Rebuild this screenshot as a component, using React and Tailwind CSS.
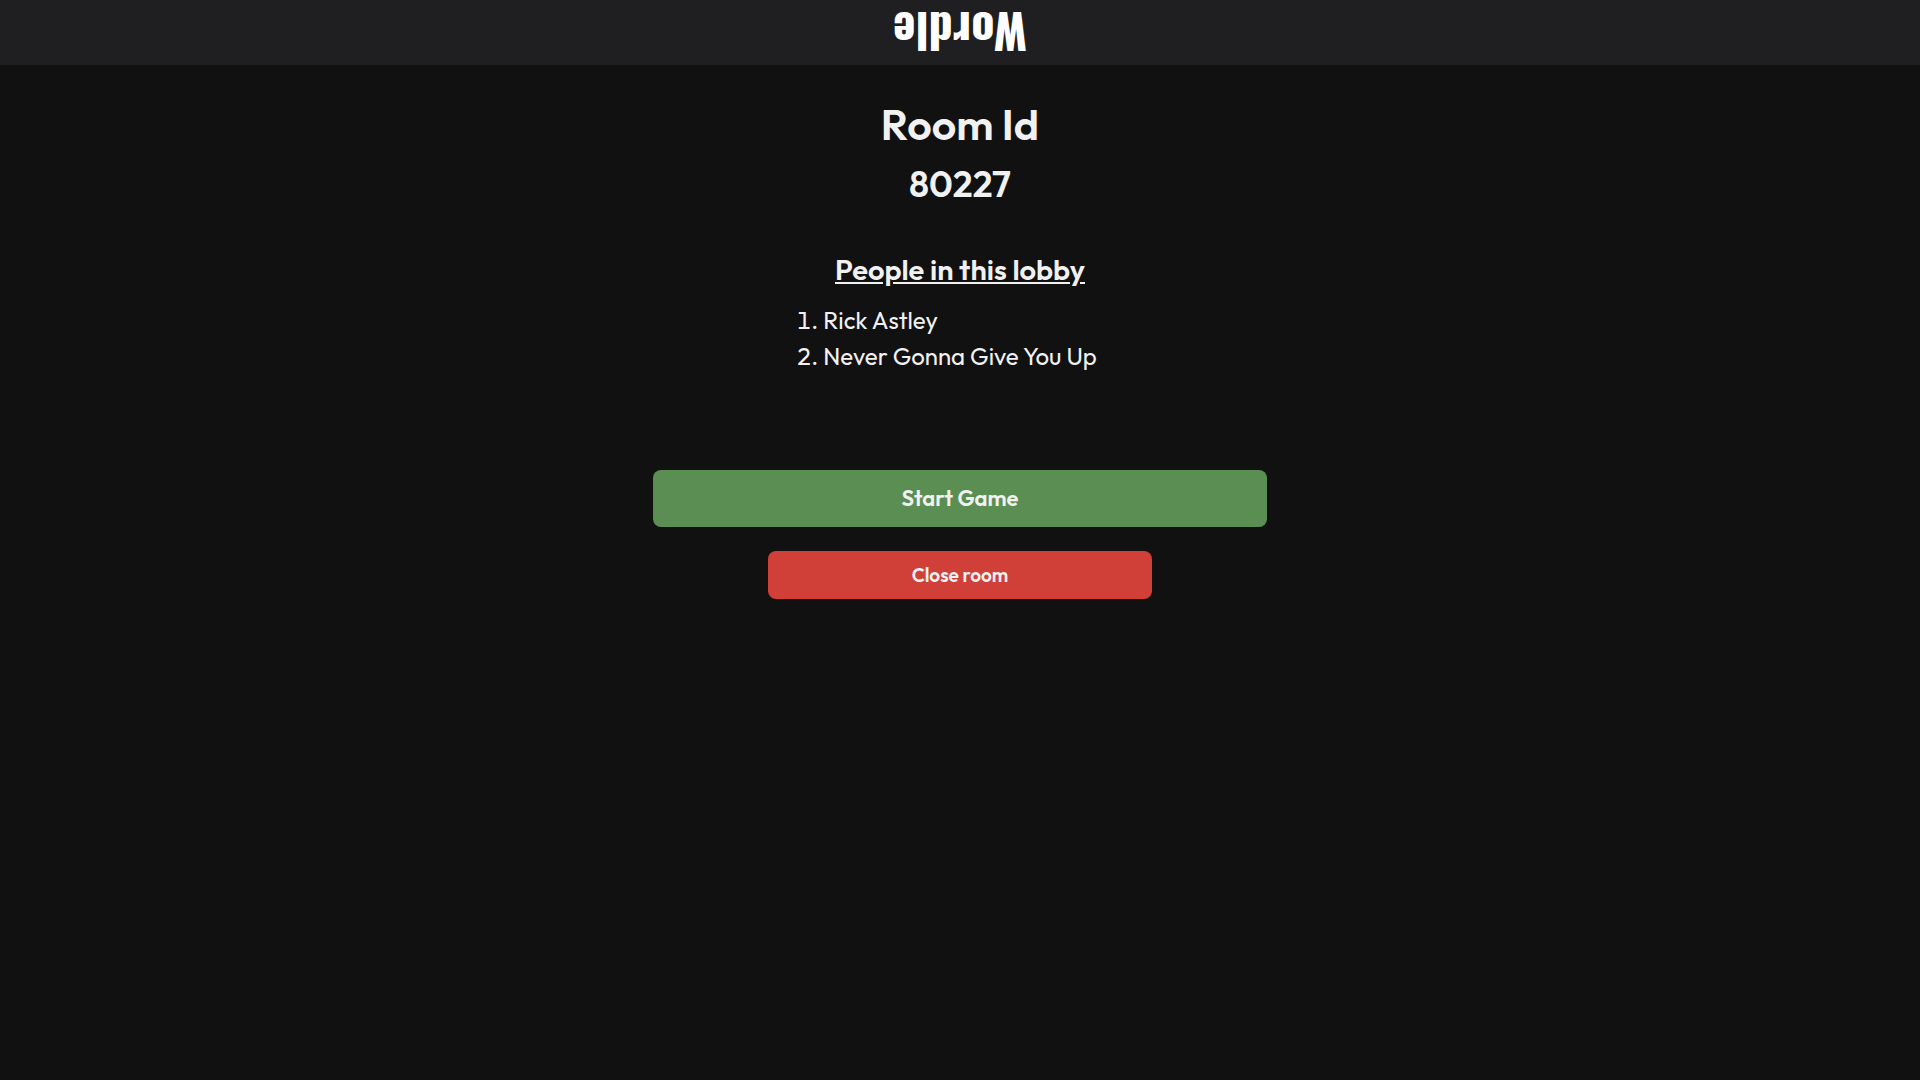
import React from "react";

const players = ["Rick Astley", "Never Gonna Give You Up"];

const Navbar = () => {
  return (
    <header className="flex items-center justify-center h-[65px] bg-[#1f1f21]">
      <a
        href="#"
        className="rotate-180 font-['Oswald','DejaVu_Serif_Condensed','DejaVu_Serif',serif] text-5xl leading-none font-bold text-white"
      >
        Wordle
      </a>
    </header>
  );
};

const Lobby = () => {
  return (
    <main className="flex flex-col items-center pt-[31px]">
      <h1 className="text-[43px] leading-14 font-semibold">Room Id</h1>
      <h2 className="mt-1 text-4xl leading-14 font-semibold">80227</h2>

      <h3 className="mt-10 text-[29px] leading-9 font-semibold underline">
        People in this lobby
      </h3>
      <ol className="mt-3.5 text-2xl leading-9 list-decimal">
        {players.map((player) => (
          <li key={player}>{player}</li>
        ))}
      </ol>

      <button className="mt-24 w-[32%] h-[57px] rounded-lg bg-[#5b8e52] text-[22px] font-semibold">
        Start Game
      </button>
      <button className="mt-6 w-1/5 h-12 rounded-lg bg-[#d03f38] text-[19px] font-semibold">
        Close room
      </button>
    </main>
  );
};

const App = () => {
  return (
    <div className="min-h-screen bg-[#111111] font-['Outfit','Lato',sans-serif] text-[#f1f1f1]">
      <Navbar />
      <Lobby />
    </div>
  );
};

export default App;
